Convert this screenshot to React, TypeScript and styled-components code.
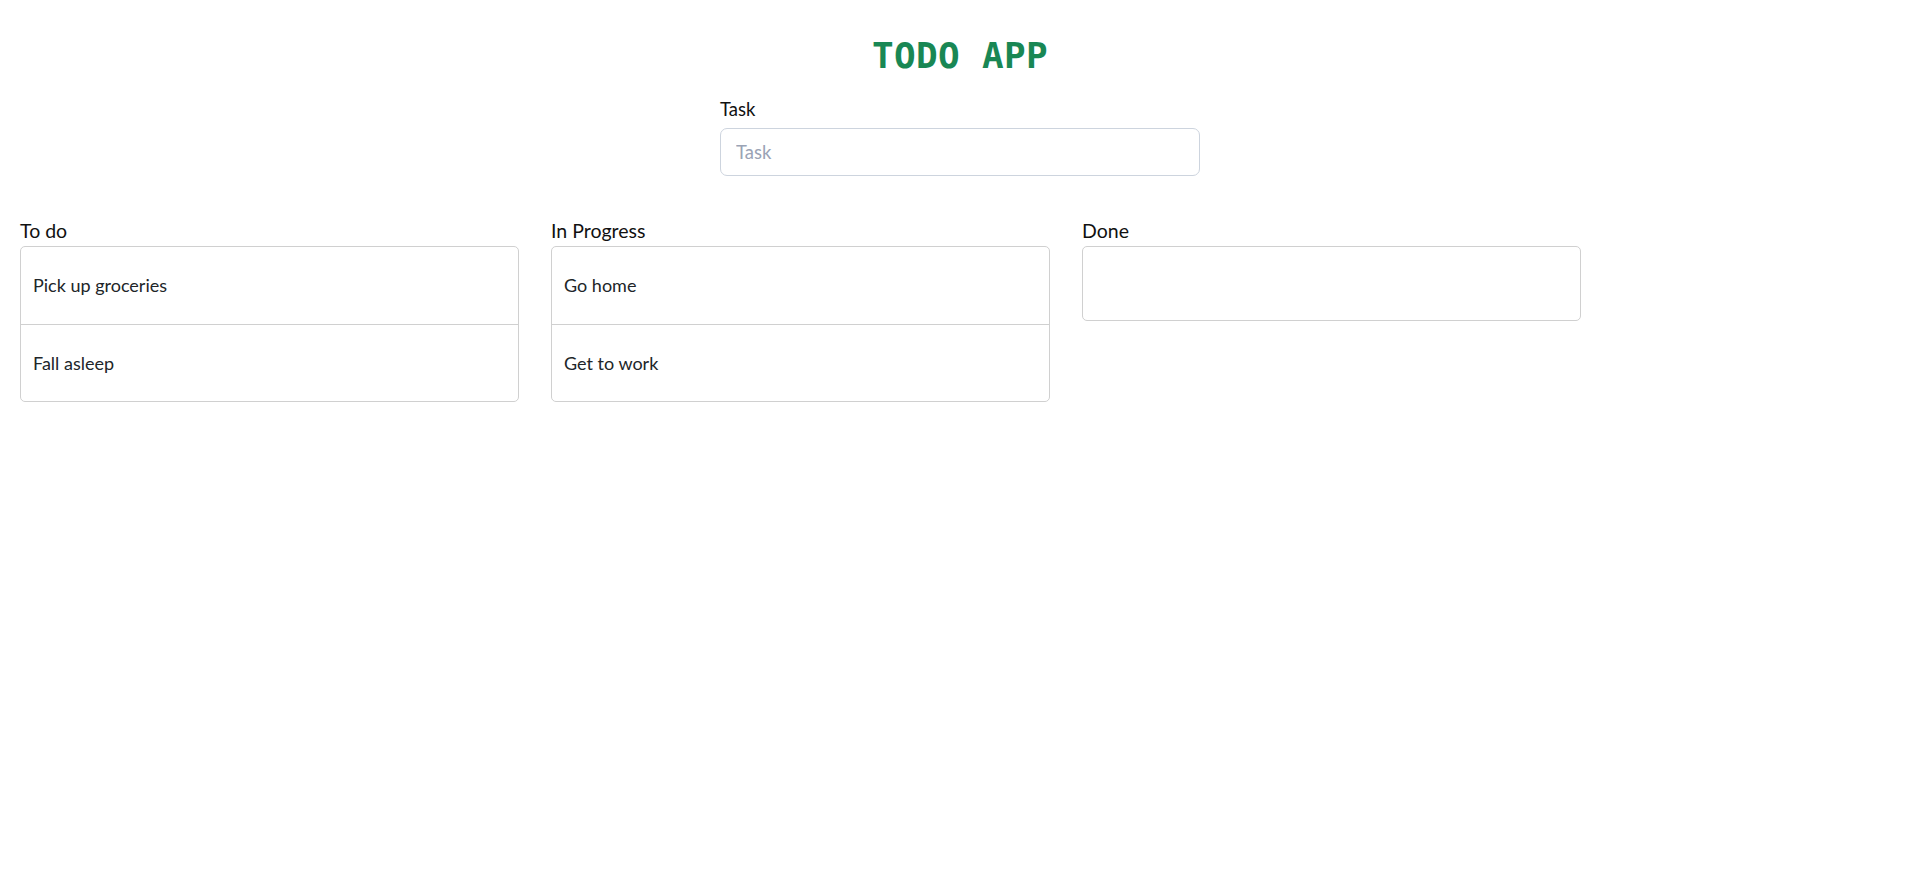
import React from "react";
import styled, { createGlobalStyle } from "styled-components";

const Global = createGlobalStyle`
  html, body { margin: 0; padding: 0; background: #fff; }
  body {
    font-family: Lato, "Noto Sans", "Liberation Sans", sans-serif;
    color: #212529;
  }
  * { box-sizing: border-box; }
`;

const Page = styled.div`
  padding: 0 20px;
`;

const Title = styled.h1`
  margin: 34px 0 0;
  text-align: center;
  font-family: "DejaVu Sans Mono", "Liberation Mono", monospace;
  font-weight: 700;
  font-size: 36px;
  line-height: 43px;
  letter-spacing: 0.3px;
  color: #198754;
`;

const Form = styled.div`
  width: 480px;
  margin: 20px auto 0;
  display: flex;
  flex-direction: column;
`;

const Label = styled.label`
  font-size: 18.5px;
  line-height: 24px;
  color: #111;
  margin-bottom: 7px;
`;

const Input = styled.input`
  height: 48px;
  border: 1px solid #cdd4de;
  border-radius: 7px;
  padding: 0 15px;
  font-family: inherit;
  font-size: 18.5px;
  color: #212529;
  outline: none;
  &::placeholder {
    color: #9aa3b5;
  }
`;

const Board = styled.div`
  display: flex;
  gap: 32px;
  margin-top: 42px;
`;

const Column = styled.section`
  width: 499px;
  display: flex;
  flex-direction: column;
`;

const ColumnTitle = styled.div`
  font-size: 19.5px;
  line-height: 26px;
  color: #111;
  margin-bottom: 2px;
`;

const List = styled.ul<{ $empty?: boolean }>`
  list-style: none;
  margin: 0;
  padding: 0;
  border: 1px solid #d0d0d0;
  border-radius: 5px;
  min-height: ${(p) => (p.$empty ? "75px" : "auto")};
`;

const Item = styled.li`
  min-height: 77px;
  display: flex;
  align-items: center;
  padding: 0 12px;
  font-size: 18px;
  line-height: 27px;
  color: #212529;
  & + & {
    border-top: 1px solid #d0d0d0;
  }
`;

const columns = [
  { title: "To do", items: ["Pick up groceries", "Fall asleep"] },
  { title: "In Progress", items: ["Go home", "Get to work"] },
  { title: "Done", items: [] as string[] },
];

export default function App() {
  return (
    <Page>
      <Global />
      <Title>TODO APP</Title>
      <Form>
        <Label htmlFor="task">Task</Label>
        <Input id="task" placeholder="Task" />
      </Form>
      <Board>
        {columns.map((c) => (
          <Column key={c.title}>
            <ColumnTitle>{c.title}</ColumnTitle>
            <List $empty={c.items.length === 0}>
              {c.items.map((it) => (
                <Item key={it}>{it}</Item>
              ))}
            </List>
          </Column>
        ))}
      </Board>
    </Page>
  );
}
